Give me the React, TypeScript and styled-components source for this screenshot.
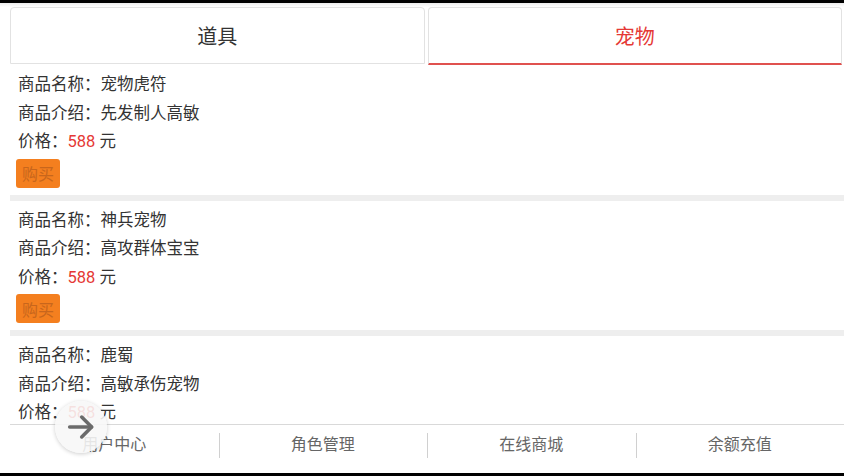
import styled, { createGlobalStyle } from "styled-components";

type Goods = {
    name: string;
    intro: string;
    price: number;
};

const goodsList: Goods[] = [
    { name: "宠物虎符", intro: "先发制人高敏", price: 588 },
    { name: "神兵宠物", intro: "高攻群体宝宝", price: 588 },
    { name: "鹿蜀", intro: "高敏承伤宠物", price: 588 },
];

const navItems = ["用户中心", "角色管理", "在线商城", "余额充值"];

const GlobalStyle = createGlobalStyle`
    html, body {
        margin: 0;
        padding: 0;
        background: #fff;
    }
    body {
        font-family: Roboto, "Noto Sans CJK SC", "Noto Sans", sans-serif;
        color: #333;
    }
`;

const Page = styled.div`
    position: relative;
    width: 844px;
    height: 476px;
    display: flex;
    flex-direction: column;
    overflow: hidden;
    background: #fff;
`;

const EdgeBar = styled.div`
    height: 3px;
    flex: none;
    background: #000;
`;

const TabBar = styled.div`
    flex: none;
    display: flex;
    gap: 3px;
    padding: 4px 2px 0 10px;
    background: linear-gradient(#ececec, #fff 4px);
`;

const Tab = styled.div<{ $active?: boolean }>`
    flex: 1;
    height: 55px;
    display: flex;
    align-items: center;
    justify-content: center;
    font-size: 20px;
    color: ${(p) => (p.$active ? "#e53935" : "#333")};
    background: #fff;
    border: 1px solid #e2e2e2;
    border-bottom: ${(p) => (p.$active ? "2px solid #e0514f" : "1px solid #e2e2e2")};
    border-radius: 4px 4px 0 0;
    box-sizing: content-box;
`;

const List = styled.div`
    flex: 1;
    overflow: hidden;
    padding-left: 10px;
`;

const Item = styled.div`
    padding: 6px 0 7px 8px;
    border-bottom: 6px solid #eeeeee;
`;

const Line = styled.div`
    font-size: 16.5px;
    line-height: 28.5px;
`;

const Price = styled.span`
    color: #e53935;
`;

const BuyButton = styled.button`
    display: block;
    margin: 2px 0 0 -2px;
    width: 44px;
    height: 29px;
    padding: 0;
    border: 0;
    border-radius: 3px;
    background: #f47f1f;
    color: #c8661c;
    font-family: inherit;
    font-size: 16px;
`;

const Nav = styled.div`
    flex: none;
    height: 48px;
    margin-left: 10px;
    border-top: 1px solid #d9d9d9;
    display: grid;
    grid-template-columns: repeat(4, 1fr);
    background: #fff;
`;

const NavItem = styled.div<{ $first?: boolean }>`
    display: flex;
    align-items: center;
    justify-content: center;
    font-size: 16px;
    color: #666;
    position: relative;
    padding-bottom: 12px;

    &::before {
        content: "";
        display: ${(p) => (p.$first ? "none" : "block")};
        position: absolute;
        left: 0;
        top: 8px;
        height: 25px;
        width: 1px;
        background: #d0d0d0;
    }
`;

// 화면 위에 떠 있는 원형 버튼
const FloatButton = styled.div`
    position: absolute;
    left: 55px;
    top: 401px;
    width: 52px;
    height: 52px;
    border-radius: 50%;
    background: rgba(247, 247, 247, 0.88);
    box-shadow: 0 1px 4px rgba(0, 0, 0, 0.2);
    display: flex;
    align-items: center;
    justify-content: center;
`;

function App() {
    return (
        <Page>
            <GlobalStyle />
            <EdgeBar />
            <TabBar>
                <Tab>道具</Tab>
                <Tab $active>宠物</Tab>
            </TabBar>
            <List>
                {goodsList.map((g, i) => (
                    <Item key={i}>
                        <Line>商品名称：{g.name}</Line>
                        <Line>商品介绍：{g.intro}</Line>
                        <Line>
                            价格：<Price>{g.price}</Price> 元
                        </Line>
                        <BuyButton>购买</BuyButton>
                    </Item>
                ))}
            </List>
            <Nav>
                {navItems.map((n, i) => (
                    <NavItem key={n} $first={i === 0}>
                        {n}
                    </NavItem>
                ))}
            </Nav>
            <EdgeBar />
            <FloatButton>
                <svg width="34" height="34" viewBox="0 0 24 24" fill="none" stroke="#6b6b6b" strokeWidth="2.5" strokeLinecap="round" strokeLinejoin="round">
                    <path d="M4 12h15.5" />
                    <path d="M12.5 5L19.5 12 12.5 19" />
                </svg>
            </FloatButton>
        </Page>
    );
}

export default App;
